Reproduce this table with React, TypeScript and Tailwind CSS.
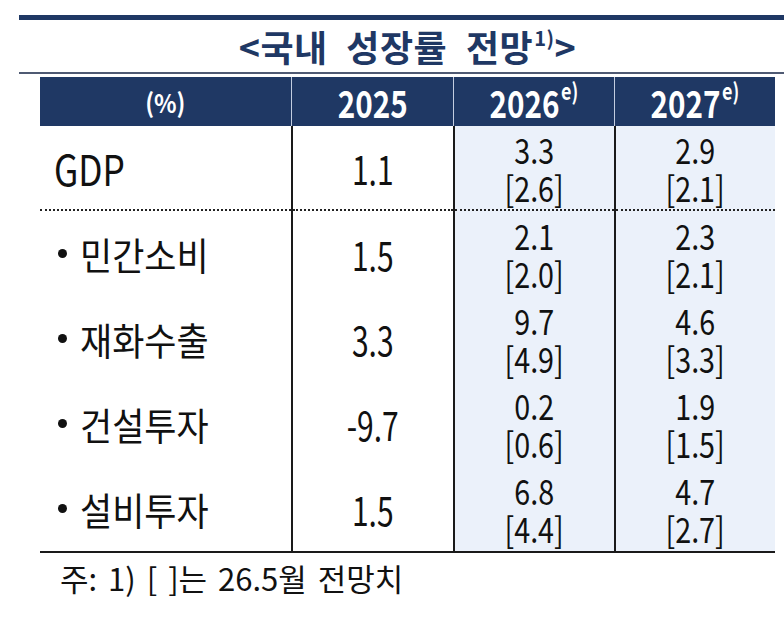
import React from "react";

type Row = {
  label: string;
  bullet: boolean;
  v25: string;
  v26: [string, string];
  v27: [string, string];
};

const rows: Row[] = [
  { label: "GDP", bullet: false, v25: "1.1", v26: ["3.3", "[2.6]"], v27: ["2.9", "[2.1]"] },
  { label: "민간소비", bullet: true, v25: "1.5", v26: ["2.1", "[2.0]"], v27: ["2.3", "[2.1]"] },
  { label: "재화수출", bullet: true, v25: "3.3", v26: ["9.7", "[4.9]"], v27: ["4.6", "[3.3]"] },
  { label: "건설투자", bullet: true, v25: "-9.7", v26: ["0.2", "[0.6]"], v27: ["1.9", "[1.5]"] },
  { label: "설비투자", bullet: true, v25: "1.5", v26: ["6.8", "[4.4]"], v27: ["4.7", "[2.7]"] },
];

function TwoLine({ a, b }: { a: string; b: string }) {
  return (
    <div className="flex flex-col items-center text-[35px] leading-[38px] text-[#111]">
      <span className="inline-block scale-x-[0.82]">{a}</span>
      <span className="inline-block scale-x-[0.82]">{b}</span>
    </div>
  );
}

function HeaderYear({ year, sup }: { year: string; sup?: boolean }) {
  return (
    <div className="flex h-full items-center justify-center border-l border-[#c3cde0]">
      <span className="inline-block scale-x-[0.78] text-[38px] font-bold leading-none text-white">
        {year}
        {sup && <sup className="relative top-[-4px] ml-[2px] align-top text-[23px] leading-none">e)</sup>}
      </span>
    </div>
  );
}

function Cell({
  children,
  dotted,
  className,
}: {
  children: React.ReactNode;
  dotted: boolean;
  className: string;
}) {
  return (
    <div className={`flex flex-col ${className}`}>
      <div className="flex flex-1 items-center justify-center">{children}</div>
      {dotted && <div className="h-0 border-b-2 border-dotted border-[#222]" />}
    </div>
  );
}

export default function App() {
  return (
    <div
      className="h-[621px] w-[784px] overflow-hidden bg-white pt-[15px]"
      style={{ fontFamily: '"Noto Sans CJK KR", "Noto Sans", sans-serif' }}
    >
      <div className="ml-[19px] h-[5px] bg-[#1f3864]" />
      <div className="ml-[19px] flex h-[52px] items-center justify-center pl-[12px]">
        <span className="text-[36px] font-bold leading-none tracking-[0.5px] text-[#1f3864] [word-spacing:10px]">
          &lt;국내 성장률 전망
          <sup className="relative top-[0px] ml-[1px] align-top text-[20px] leading-none">1)</sup>
          &gt;
        </span>
      </div>
      <div className="ml-[19px] h-[2px] bg-[#4f5a73]" />

      <div className="ml-[40px] mt-[3px] w-[735px]">
        <div className="grid h-[49px] grid-cols-[251px_162px_161px_161px] bg-[#1f3864]">
          <div className="flex h-full items-center justify-center">
            <span className="inline-block scale-x-[0.9] text-[26px] font-bold leading-none text-white">(%)</span>
          </div>
          <HeaderYear year="2025" />
          <HeaderYear year="2026" sup />
          <HeaderYear year="2027" sup />
        </div>

        {rows.map((r, i) => {
          const dotted = i === 0;
          return (
            <div key={r.label} className="grid h-[85px] grid-cols-[251px_162px_161px_161px]">
              <div className="flex flex-col">
                <div className="flex flex-1 items-center pl-[14px]">
                  {r.bullet ? (
                    <>
                      <div className="ml-[4px] h-[9px] w-[9px] rounded-full bg-[#111]" />
                      <span className="ml-[13px] inline-block origin-left scale-x-[0.92] text-[38px] leading-none text-[#111]">
                        {r.label}
                      </span>
                    </>
                  ) : (
                    <span className="inline-block origin-left scale-x-[0.84] text-[42px] leading-none text-[#111]">
                      {r.label}
                    </span>
                  )}
                </div>
                {dotted && <div className="h-0 border-b-2 border-dotted border-[#222]" />}
              </div>
              <Cell dotted={dotted} className="border-l-2 border-l-[#1a1a1a]">
                <span className="inline-block scale-x-[0.75] text-[40px] leading-none text-[#111]">{r.v25}</span>
              </Cell>
              <Cell dotted={dotted} className="border-l-2 border-l-[#1a1a1a] bg-[#ebf1fa]">
                <TwoLine a={r.v26[0]} b={r.v26[1]} />
              </Cell>
              <Cell dotted={dotted} className="border-l-2 border-l-[#1a1a1a] bg-[#ebf1fa]">
                <TwoLine a={r.v27[0]} b={r.v27[1]} />
              </Cell>
            </div>
          );
        })}
        <div className="h-[2px] bg-[#1a1a1a]" />
      </div>

      <div className="ml-[60px] mt-[9px] text-[31px] leading-none text-[#111] [word-spacing:4px]">
        주: 1) [ ]는 26.5월 전망치
      </div>
    </div>
  );
}
